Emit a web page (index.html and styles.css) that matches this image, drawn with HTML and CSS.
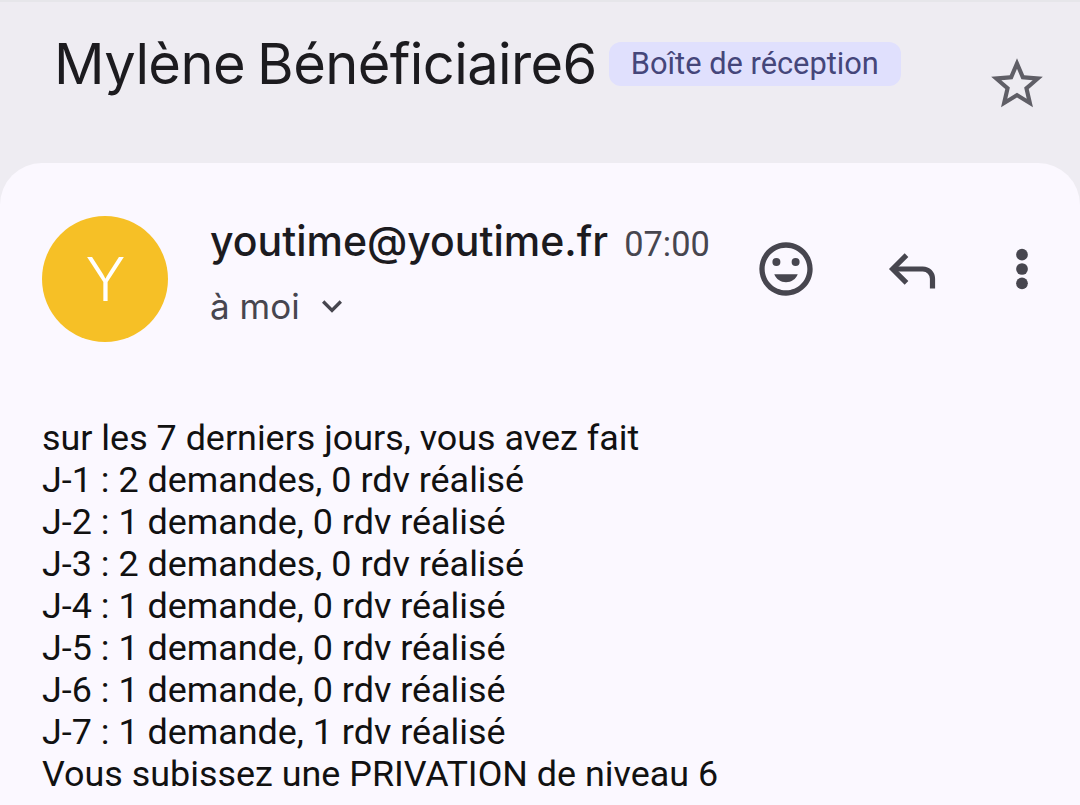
FILE: index.html
```html
<!DOCTYPE html>
<html lang="fr">
<head>
<meta charset="utf-8">
<title>Mylène Bénéficiaire6</title>
<link rel="stylesheet" href="styles.css">
</head>
<body>
<div class="status-strip"></div>
<header class="subject">
  <div class="subject-main">
    <h1 class="subject-title">Mylène Bénéficiaire6</h1>
    <span class="label">Boîte de réception</span>
  </div>
  <svg class="star" viewBox="0 0 24 24"><path d="M22 9.24l-7.19-.62L12 2 9.19 8.63 2 9.24l5.46 4.73L5.82 21 12 17.27 18.18 21l-1.63-7.03L22 9.24zM12 15.4l-3.76 2.27 1-4.28-3.32-2.88 4.38-.38L12 6.1l1.71 4.04 4.38.38-3.32 2.88 1 4.28L12 15.4z"/></svg>
</header>
<main class="card">
  <section class="sender">
    <div class="avatar">Y</div>
    <div class="sender-info">
      <div class="from-line"><span class="from">youtime@youtime.fr</span><span class="time">07:00</span></div>
      <div class="to-line"><span>à moi</span>
        <svg class="chevron" viewBox="0 0 24 24"><path d="M7.41 8.59L12 13.17l4.59-4.58L18 10l-6 6-6-6z"/></svg>
      </div>
    </div>
    <div class="actions">
      <svg class="icon-smile" viewBox="0 0 24 24"><path d="M11.99 2C6.47 2 2 6.48 2 12s4.47 10 9.99 10C17.52 22 22 17.52 22 12S17.52 2 11.99 2zM12 20c-4.42 0-8-3.58-8-8s3.58-8 8-8 8 3.58 8 8-3.58 8-8 8z"/><circle cx="8.4" cy="9.4" r="1.5"/><circle cx="15.6" cy="9.4" r="1.5"/><path d="M7.6 14h8.8c-.7 1.8-2.4 3-4.4 3s-3.7-1.2-4.4-3z"/></svg>
      <svg class="icon-reply" viewBox="0 0 24 24"><path d="M9 5.6L2.6 12 9 18.4"/><path d="M3 12h13.5c2.6 0 4.5 2 4.5 4.5V21"/></svg>
      <svg class="icon-more" viewBox="0 0 24 24"><circle cx="12" cy="4.2" r="3.2"/><circle cx="12" cy="12" r="3.2"/><circle cx="12" cy="19.8" r="3.2"/></svg>
    </div>
  </section>
  <section class="message">
    <p>sur les 7 derniers jours, vous avez fait</p>
    <p>J-1 : 2 demandes, 0 rdv réalisé</p>
    <p>J-2 : 1 demande, 0 rdv réalisé</p>
    <p>J-3 : 2 demandes, 0 rdv réalisé</p>
    <p>J-4 : 1 demande, 0 rdv réalisé</p>
    <p>J-5 : 1 demande, 0 rdv réalisé</p>
    <p>J-6 : 1 demande, 0 rdv réalisé</p>
    <p>J-7 : 1 demande, 1 rdv réalisé</p>
    <p>Vous subissez une PRIVATION de niveau 6</p>
  </section>
</main>
</body>
</html>
```
FILE: styles.css
```css
* { box-sizing: border-box; }
html, body { margin: 0; height: 805px; overflow: hidden; }
body { background: #eeecf2; font-family: Roboto, sans-serif; color: #1c1b1f; display: flex; flex-direction: column; }
.status-strip { height: 2px; background: #e6e6ea; flex: none; }
.subject { height: 161px; flex: none; padding: 32px 38px 0 54px; display: flex; justify-content: space-between; align-items: flex-start; }
.subject-main { display: flex; align-items: flex-start; gap: 12px; }
.subject-title { margin: 0; font: 400 56px/60px Inter, sans-serif; letter-spacing: -0.6px; word-spacing: -3px; white-space: nowrap; }
.label { margin-top: 8px; height: 44px; padding: 0 22px; background: #e0e0fd; border-radius: 12px; color: #45467a; font-size: 30.8px; line-height: 43px; white-space: nowrap; }
.star { width: 62px; height: 62px; margin: 19px -6px 0 0; fill: #5f5e66; }
.card { flex: 1; background: #fbf8ff; border-radius: 42px 42px 0 0; padding: 53px 0 0 42px; }
.sender { display: flex; align-items: flex-start; height: 126px; }
.avatar { width: 126px; height: 126px; flex: none; border-radius: 50%; background: #f6c026; color: #fff; font: 300 60px/126px Inter, sans-serif; text-align: center; padding-left: 1px; }
.sender-info { margin-left: 42px; padding-top: 1px; width: 557px; flex: none; }
.from-line { display: flex; align-items: baseline; gap: 16px; height: 48px; }
.from { font: 500 41px/48px Inter, sans-serif; white-space: nowrap; }
.time { font-size: 34.4px; color: #47464f; }
.to-line { display: flex; align-items: center; gap: 14px; margin-top: 19px; font: 400 35px/44px Inter, sans-serif; color: #47464f; }
.chevron { width: 40px; height: 40px; fill: #47464f; margin-left: -2px; }
.actions { display: flex; align-items: center; margin-top: 21px; }
.actions svg { flex: none; }
.icon-smile { width: 64px; height: 64px; fill: #47464f; margin-left: -13px; }
.icon-reply { width: 52px; height: 52px; fill: none; stroke: #47464f; stroke-width: 2.4; margin-left: 69px; }
.icon-more { width: 44px; height: 44px; fill: #47464f; margin-left: 61px; }
.message { margin-top: 75px; font-size: 35.9px; line-height: 42px; color: #111; }
.message p { margin: 0; white-space: nowrap; }
```
